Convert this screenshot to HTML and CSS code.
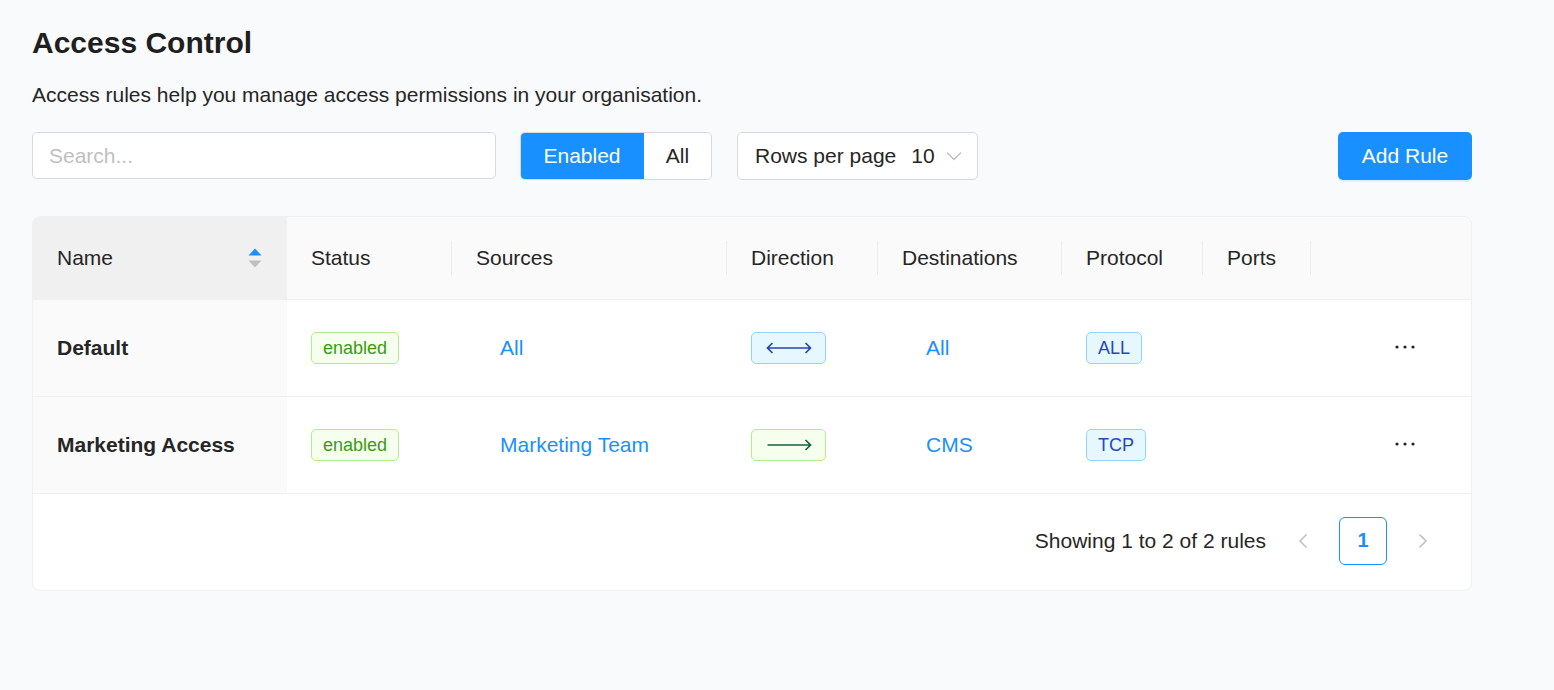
FILE: index.html
```html
<!DOCTYPE html>
<html lang="en">
<head>
<meta charset="utf-8">
<title>Access Control</title>
<link rel="stylesheet" href="styles.css">
</head>
<body>
<main class="page">
  <h1 class="title">Access Control</h1>
  <p class="subtitle">Access rules help you manage access permissions in your organisation.</p>

  <div class="toolbar">
    <input class="search" type="text" placeholder="Search...">
    <div class="segmented">
      <span class="seg seg-active">Enabled</span>
      <span class="seg seg-all">All</span>
    </div>
    <div class="select">
      <span class="select-label">Rows per page</span>
      <span class="select-value">10</span>
      <svg class="select-arrow" width="16" height="10" viewBox="0 0 16 10"><path d="M1 1.5 L8 8.5 L15 1.5" fill="none" stroke="#bfbfbf" stroke-width="1.4"/></svg>
    </div>
    <button class="btn-primary">Add Rule</button>
  </div>

  <div class="table-card">
    <table class="rules">
      <colgroup>
        <col class="c-name"><col class="c-status"><col class="c-src"><col class="c-dir"><col class="c-dst"><col class="c-proto"><col class="c-ports"><col class="c-act">
      </colgroup>
      <thead>
        <tr>
          <th class="th-name">
            <div class="th-sort">
              <span>Name</span>
              <span class="sorter">
                <svg width="14" height="20" viewBox="0 0 14 20"><path d="M7 0.5 L13.5 7.5 L0.5 7.5 Z" fill="#1890ff"/><path d="M0.5 12.5 L13.5 12.5 L7 19.5 Z" fill="#bfbfbf"/></svg>
              </span>
            </div>
          </th>
          <th class="sep">Status</th>
          <th class="sep">Sources</th>
          <th class="sep">Direction</th>
          <th class="sep">Destinations</th>
          <th class="sep">Protocol</th>
          <th class="sep">Ports</th>
          <th></th>
        </tr>
      </thead>
      <tbody>
        <tr>
          <td class="td-name">Default</td>
          <td><span class="tag tag-green">enabled</span></td>
          <td><span class="link">All</span></td>
          <td>
            <span class="tag tag-blue tag-dir">
              <svg width="46" height="14" viewBox="0 0 46 14"><path d="M1.5 7 H44.5 M6.5 2 L1.5 7 L6.5 12 M39.5 2 L44.5 7 L39.5 12" fill="none" stroke="#2a47a8" stroke-width="1.7"/></svg>
            </span>
          </td>
          <td><span class="link">All</span></td>
          <td><span class="tag tag-blue tag-proto">ALL</span></td>
          <td></td>
          <td class="td-act">
            <svg class="dots" width="20" height="4" viewBox="0 0 20 4"><circle cx="2" cy="2" r="1.6" fill="#262626"/><circle cx="10" cy="2" r="1.6" fill="#262626"/><circle cx="18" cy="2" r="1.6" fill="#262626"/></svg>
          </td>
        </tr>
        <tr>
          <td class="td-name">Marketing Access</td>
          <td><span class="tag tag-green">enabled</span></td>
          <td><span class="link">Marketing Team</span></td>
          <td>
            <span class="tag tag-green tag-dir">
              <svg width="46" height="14" viewBox="0 0 46 14"><path d="M1.5 7 H44.5 M39.5 2 L44.5 7 L39.5 12" fill="none" stroke="#17603f" stroke-width="1.7"/></svg>
            </span>
          </td>
          <td><span class="link">CMS</span></td>
          <td><span class="tag tag-blue tag-proto">TCP</span></td>
          <td></td>
          <td class="td-act">
            <svg class="dots" width="20" height="4" viewBox="0 0 20 4"><circle cx="2" cy="2" r="1.6" fill="#262626"/><circle cx="10" cy="2" r="1.6" fill="#262626"/><circle cx="18" cy="2" r="1.6" fill="#262626"/></svg>
          </td>
        </tr>
      </tbody>
    </table>
    <div class="pagination">
      <span class="pg-total">Showing 1 to 2 of 2 rules</span>
      <span class="pg-btn pg-disabled">
        <svg width="12" height="16" viewBox="0 0 12 16"><path d="M9.5 1.5 L3 8 L9.5 14.5" fill="none" stroke="#bfbfbf" stroke-width="1.5"/></svg>
      </span>
      <span class="pg-btn pg-current">1</span>
      <span class="pg-btn pg-disabled">
        <svg width="12" height="16" viewBox="0 0 12 16"><path d="M2.5 1.5 L9 8 L2.5 14.5" fill="none" stroke="#bfbfbf" stroke-width="1.5"/></svg>
      </span>
    </div>
  </div>
</main>
</body>
</html>
```

FILE: styles.css
```css
* {
  box-sizing: border-box;
}

html, body {
  margin: 0;
  padding: 0;
  background: #f9fafb;
}

body {
  font-family: "Liberation Sans", Arial, sans-serif;
  color: #262626;
}

.page {
  width: 1440px;
  margin-left: 32px;
  padding-top: 25px;
}

.title {
  margin: 0;
  font-size: 30px;
  line-height: 36px;
  font-weight: 700;
  color: #1f1f1f;
}

.subtitle {
  margin: 20px 0 0;
  font-size: 21px;
  line-height: 28px;
  color: #262626;
}

.toolbar {
  margin-top: 23px;
  display: flex;
  align-items: flex-start;
}

.search {
  width: 464px;
  height: 47px;
  border: 1px solid #d9d9d9;
  border-radius: 5px;
  background: #fff;
  padding: 0 16px;
  font-family: inherit;
  font-size: 21px;
  color: #262626;
  outline: none;
}

.search::placeholder {
  color: #bfbfbf;
}

.segmented {
  margin-left: 24px;
  display: flex;
  height: 48px;
  border: 1px solid #d9d9d9;
  border-radius: 5px;
  background: #fff;
  overflow: hidden;
}

.seg {
  display: flex;
  align-items: center;
  justify-content: center;
  font-size: 21px;
}

.seg-active {
  width: 124px;
  margin: -1px 0 -1px -1px;
  background: #1890ff;
  color: #fff;
}

.seg-all {
  width: 67px;
  color: #262626;
}

.select {
  margin-left: 25px;
  width: 241px;
  height: 48px;
  border: 1px solid #d9d9d9;
  border-radius: 5px;
  background: #fff;
  display: flex;
  align-items: center;
  padding-left: 17px;
  font-size: 21px;
}

.select-label {
  color: #262626;
}

.select-value {
  margin-left: 15px;
  color: #262626;
}

.select-arrow {
  margin-left: 11px;
}

.btn-primary {
  margin-left: auto;
  width: 134px;
  height: 48px;
  border: none;
  border-radius: 5px;
  background: #1890ff;
  color: #fff;
  font-family: inherit;
  font-size: 21px;
  box-shadow: 0 2px 0 rgba(5, 145, 255, 0.1);
  padding: 0;
}

.table-card {
  margin-top: 36px;
  background: #fff;
  border: 1px solid #f0f0f0;
  border-radius: 8px;
  overflow: hidden;
}

.rules {
  width: 100%;
  border-collapse: collapse;
  table-layout: fixed;
}

.c-name { width: 254px; }
.c-status { width: 165px; }
.c-src { width: 275px; }
.c-dir { width: 151px; }
.c-dst { width: 184px; }
.c-proto { width: 141px; }
.c-ports { width: 108px; }
.c-act { width: 160px; }

.rules th {
  position: relative;
  height: 82px;
  padding: 0 24px;
  background: #fafafa;
  border-bottom: 1px solid #f0f0f0;
  text-align: left;
  font-weight: 400;
  font-size: 21px;
  color: #262626;
}

.rules th.th-name {
  background: #f0f0f0;
}

.rules th.sep::after {
  content: "";
  position: absolute;
  right: 0;
  top: 50%;
  width: 1px;
  height: 34px;
  margin-top: -17px;
  background: #ececec;
}

.th-sort {
  display: flex;
  align-items: center;
  justify-content: space-between;
}

.sorter {
  display: flex;
  margin-right: 1px;
}

.rules td {
  height: 97px;
  padding: 0 24px;
  border-bottom: 1px solid #f0f0f0;
  font-size: 21px;
  color: #262626;
  vertical-align: middle;
}

.rules td.td-name {
  background: #fafafa;
  font-weight: 700;
}

.tag {
  display: inline-flex;
  align-items: center;
  justify-content: center;
  height: 32px;
  padding: 1px 11px 0;
  border-radius: 5px;
  font-size: 18px;
  vertical-align: middle;
}

.tag-green {
  background: #f6ffed;
  border: 1px solid #b7eb8f;
  color: #389e0d;
}

.tag-blue {
  background: #e6f7ff;
  border: 1px solid #91d5ff;
  color: #2346c8;
}

.tag-dir {
  width: 75px;
  padding: 0;
}

.link {
  display: inline-block;
  padding-left: 24px;
  color: #1890ff;
}

.td-act {
  padding-left: 84px !important;
}

.dots {
  display: block;
  margin-top: -2px;
}

.pagination {
  height: 96px;
  display: flex;
  align-items: center;
  justify-content: flex-end;
  gap: 12px;
  padding-right: 24px;
  padding-bottom: 2px;
  font-size: 21px;
}

.pg-total {
  margin-right: 1px;
  color: #262626;
}

.pg-btn {
  width: 48px;
  height: 48px;
  display: flex;
  align-items: center;
  justify-content: center;
  border-radius: 6px;
}

.pg-current {
  border: 1px solid #1890ff;
  color: #1890ff;
  font-weight: 700;
  font-size: 20px;
}
```
